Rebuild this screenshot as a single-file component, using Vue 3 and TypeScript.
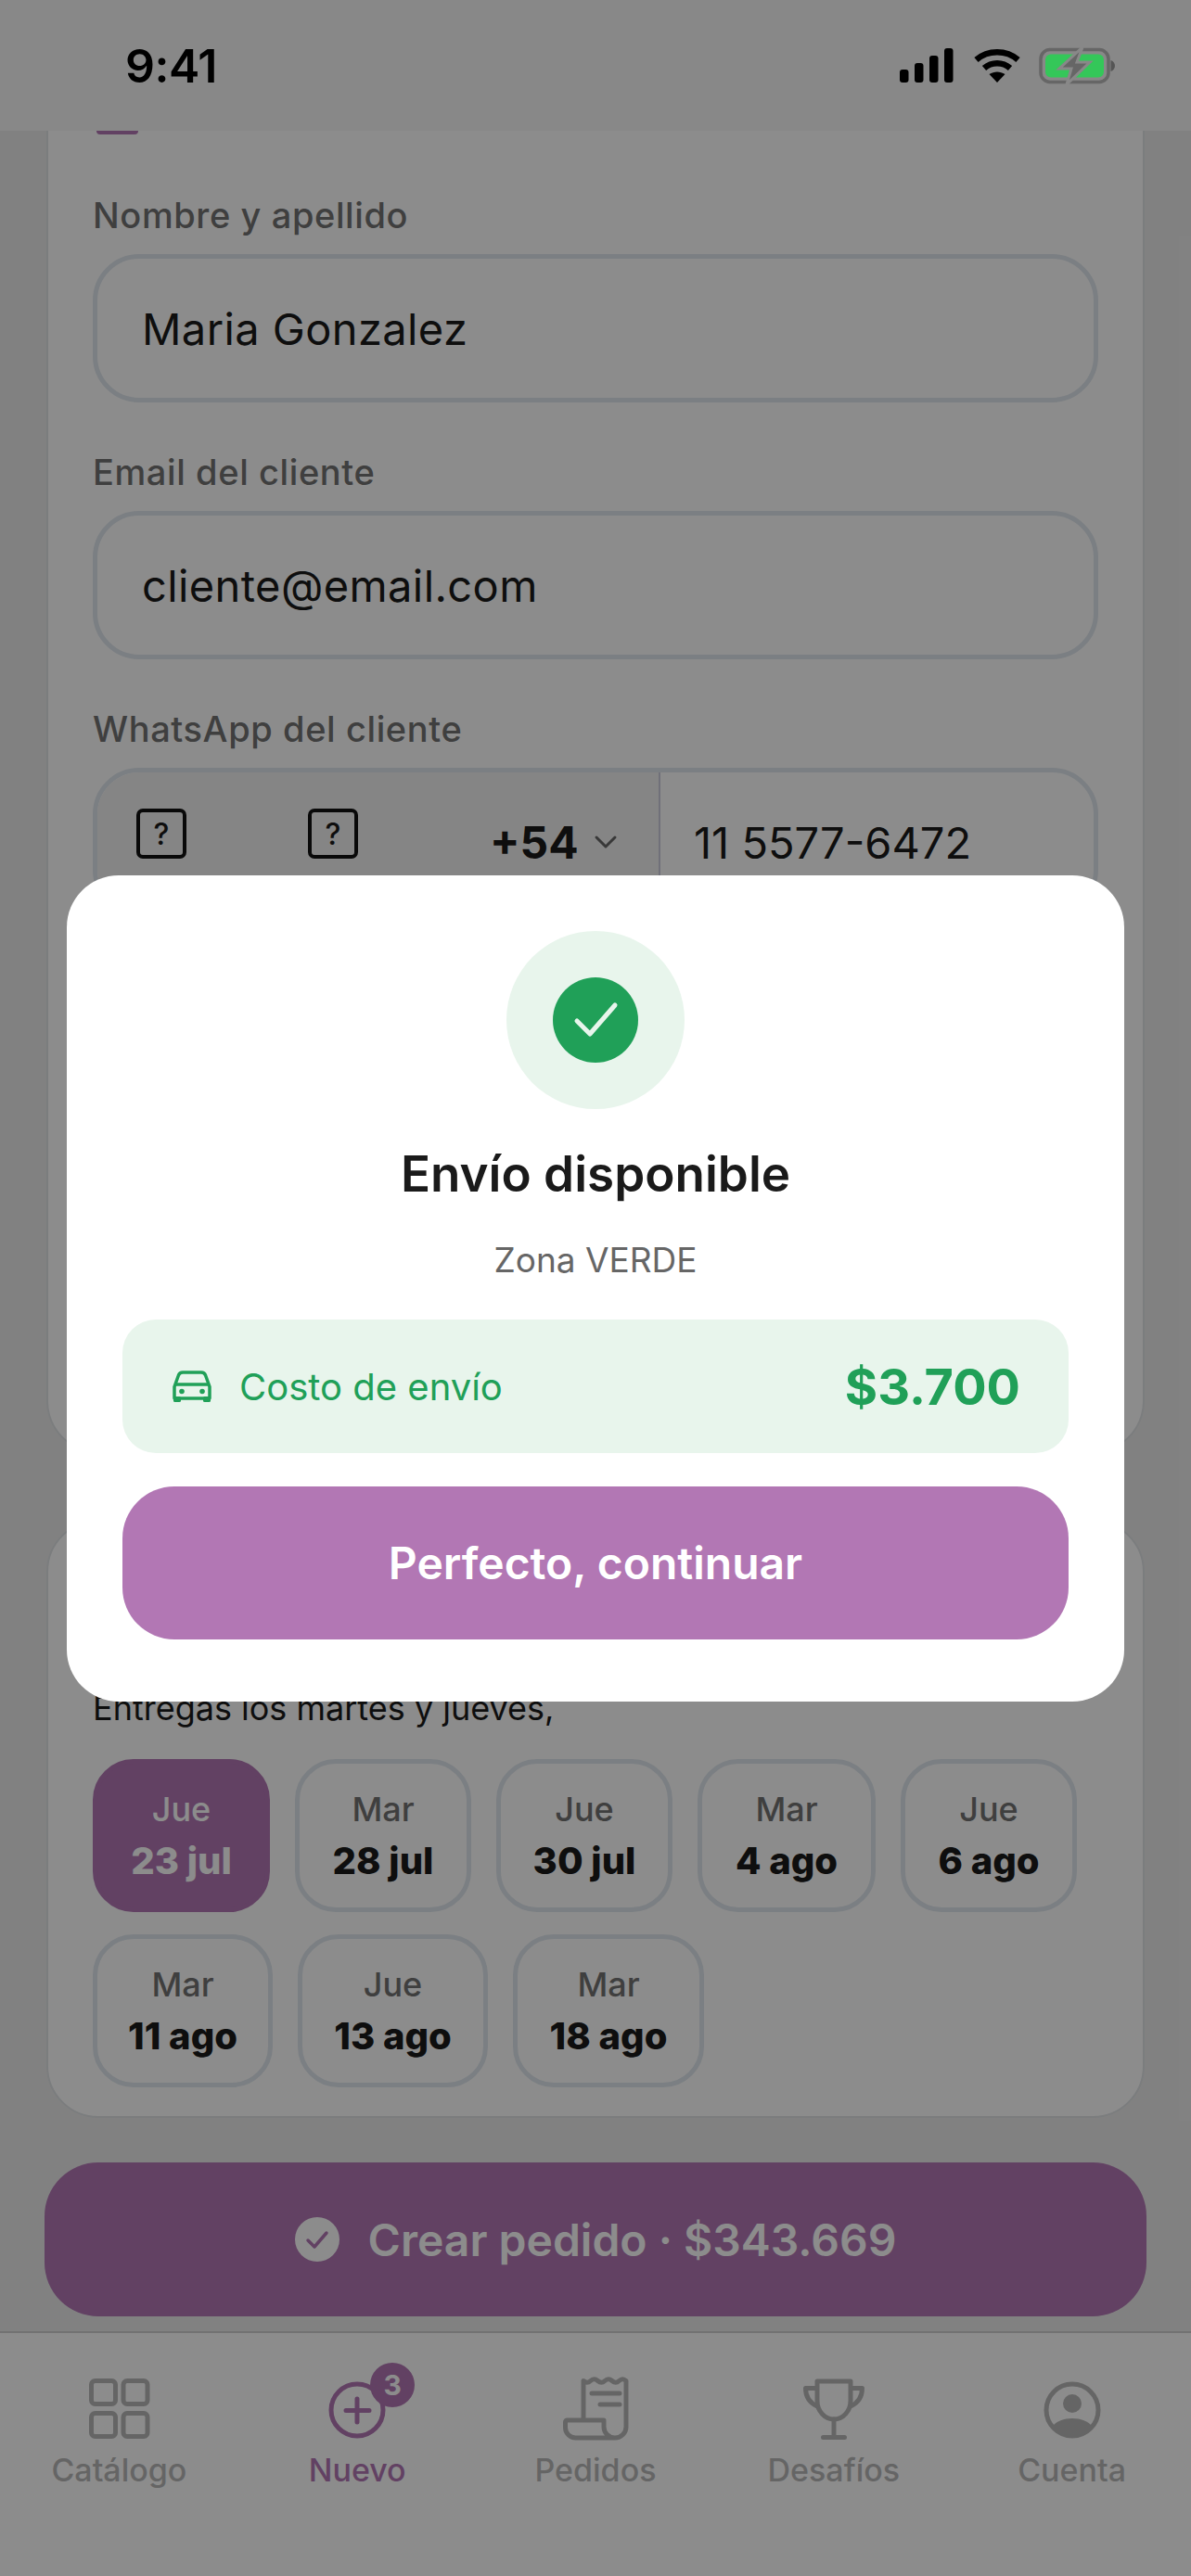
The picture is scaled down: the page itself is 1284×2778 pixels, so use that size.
<template>
  <div class="screen">
    <header class="status">
      <span class="time">9:41</span>
      <div class="status-icons">
        <svg class="signal" width="68" height="38" viewBox="0 0 68 38">
          <rect x="0" y="23" width="9.5" height="14" rx="3" />
          <rect x="16" y="16" width="9.5" height="21" rx="3" />
          <rect x="32" y="8" width="9.5" height="29" rx="3" />
          <rect x="48" y="0" width="9.5" height="37" rx="3" />
        </svg>
        <svg class="wifi" width="50" height="38" viewBox="0 0 50 38" fill="none">
          <path d="M2.5 12.5C15 1.5 35 1.5 47.500 12.5" stroke="#000" stroke-width="6.5" />
          <path d="M11 21.500C19 14.500 31 14.500 39 21.500" stroke="#000" stroke-width="6.500" />
          <path d="M16.500 28 25 37 33.500 28C28 24.500 22 24.500 16.500 28Z" fill="#000" />
        </svg>
        <svg class="battery" width="82" height="40" viewBox="0 0 82 40" fill="none">
          <rect x="2" y="2.500" width="73" height="35" rx="10" stroke="#666" stroke-width="3.500" />
          <rect x="7" y="7.500" width="63" height="25" rx="6" fill="#34c759" />
          <path d="M77.500 14v12c3-1 4.500-3.500 4.500-6s-1.500-5-4.500-6Z" fill="#555" />
          <path d="M47 0 22 23h13l-5 17 25-24H41Z" fill="#666" stroke="#888" stroke-width="3" />
        </svg>
      </div>
    </header>

    <main class="content">
      <span class="check-tail"></span>
      <section class="card card-client">
        <label class="field-label">Nombre y apellido</label>
        <div class="input">Maria Gonzalez</div>
        <label class="field-label">Email del cliente</label>
        <div class="input">cliente@email.com</div>
        <label class="field-label">WhatsApp del cliente</label>
        <div class="phone">
          <div class="phone-code">
            <span class="tofu">?</span>
            <span class="tofu">?</span>
            <b class="dial">+54</b>
            <svg width="26" height="16" viewBox="0 0 26 16" fill="none">
              <path d="M3 3l10 10L23 3" stroke="#666" stroke-width="3" stroke-linecap="round" stroke-linejoin="round" />
            </svg>
          </div>
          <div class="phone-number">11 5577-6472</div>
        </div>
      </section>

      <section class="card card-dates">
        <p class="dates-hint">Entregas los martes y jueves,</p>
        <div class="dates">
          <button
            v-for="d in dates"
            :key="d.date"
            class="date"
            :class="{ active: d.active }"
            :style="{ width: d.width + 'px' }"
          >
            <span class="date-day">{{ d.day }}</span>
            <span class="date-num">{{ d.date }}</span>
          </button>
        </div>
      </section>

      <button class="create">
        <svg width="48" height="48" viewBox="0 0 48 48">
          <circle cx="24" cy="24" r="24" fill="#fff" />
          <path d="M14 25l7 7 13-15" fill="none" stroke="#b277b4" stroke-width="3.500" stroke-linecap="round" stroke-linejoin="round" />
        </svg>
        Crear pedido · $343.669
      </button>
    </main>

    <nav class="tabbar">
      <div class="tab">
        <svg width="84" height="84" viewBox="0 0 84 84" fill="none">
          <rect x="12.500" y="11.500" width="26" height="25" rx="4" />
          <rect x="47" y="11.500" width="26" height="25" rx="4" />
          <rect x="12.500" y="46.500" width="26" height="25" rx="4" />
          <rect x="47" y="46.500" width="26" height="25" rx="4" />
        </svg>
        <span>Catálogo</span>
      </div>
      <div class="tab on">
        <div class="tab-icon">
          <svg width="84" height="84" viewBox="0 0 84 84" fill="none">
            <circle cx="42" cy="43" r="28" />
            <path d="M42 31v25M30 43.500h25" stroke-linecap="round" />
          </svg>
          <span class="badge">3</span>
        </div>
        <span>Nuevo</span>
      </div>
      <div class="tab">
        <svg width="84" height="84" viewBox="0 0 84 84" fill="none">
          <path d="M29 54V11.500q4 3.500 7.700 0t7.700 0 7.700 0 7.700 0 7.700 0 7.500 0V61a12 12 0 0 1-24 0v-7H11.500a2 2 0 0 0-2 2v6a11 11 0 0 0 11 11H63" stroke-linejoin="round" />
          <path d="M38 25h30M47 37h21" stroke-linecap="round" />
        </svg>
        <span>Pedidos</span>
      </div>
      <div class="tab">
        <svg width="84" height="84" viewBox="0 0 84 84" fill="none">
          <path d="M24 12H60V33a18 20 0 0 1-36 0Z" stroke-linejoin="round" />
          <path d="M24 19.500H11.500C11.500 28 15.500 35 24 39M60 19.500H72.500C72.500 28 68.500 35 60 39" stroke-linejoin="round" />
          <path d="M42 53V72M30.500 72.500H53.500" stroke-linecap="round" />
        </svg>
        <span>Desafíos</span>
      </div>
      <div class="tab">
        <svg width="84" height="84" viewBox="0 0 84 84" fill="none">
          <circle cx="42" cy="43" r="28" />
          <circle class="solid" cx="42" cy="36" r="10" />
          <path class="solid" d="M20 61C25 55 33 52 42 52S59 55 64 61A28 28 0 0 1 20 61Z" />
        </svg>
        <span>Cuenta</span>
      </div>
    </nav>

    <div class="overlay">
      <div class="modal">
        <div class="halo">
          <svg width="92" height="92" viewBox="0 0 92 92">
            <circle cx="46" cy="46" r="46" fill="#20a058" />
            <path d="M26 47l14 14 27-31" fill="none" stroke="#e8f5ec" stroke-width="5" stroke-linecap="round" stroke-linejoin="round" />
          </svg>
        </div>
        <h2 class="modal-title">Envío disponible</h2>
        <p class="modal-zone">Zona VERDE</p>
        <div class="cost">
          <svg width="42" height="34" viewBox="0 0 42 34" fill="none">
            <path d="M2 30V17.500L6.500 5C7.300 3 8.800 2 11 2H31C33.200 2 34.700 3 35.500 5L40 17.500V30Z" stroke="#20a058" stroke-width="3.500" stroke-linejoin="round" />
            <path d="M3 15H39" stroke="#20a058" stroke-width="3.500" />
            <circle cx="10" cy="22.500" r="2.800" fill="#20a058" />
            <circle cx="32" cy="22.500" r="2.800" fill="#20a058" />
            <rect x="1" y="28" width="8" height="6" rx="1.500" fill="#20a058" />
            <rect x="33" y="28" width="8" height="6" rx="1.500" fill="#20a058" />
          </svg>
          <span class="cost-label">Costo de envío</span>
          <span class="cost-value">$3.700</span>
        </div>
        <button class="confirm">Perfecto, continuar</button>
      </div>
    </div>
  </div>
</template>

<script setup lang="ts">
interface DateChip {
  day: string;
  date: string;
  width: number;
  active?: boolean;
}

const dates: DateChip[] = [
  { day: 'Jue', date: '23 jul', width: 191, active: true },
  { day: 'Mar', date: '28 jul', width: 190 },
  { day: 'Jue', date: '30 jul', width: 190 },
  { day: 'Mar', date: '4 ago', width: 192 },
  { day: 'Jue', date: '6 ago', width: 190 },
  { day: 'Mar', date: '11 ago', width: 194 },
  { day: 'Jue', date: '13 ago', width: 205 },
  { day: 'Mar', date: '18 ago', width: 206 },
];
</script>

<style>
html,
body {
  margin: 0;
  background: #ececec;
}
</style>

<style scoped>
.screen {
  position: relative;
  width: 1284px;
  height: 2778px;
  overflow: hidden;
  background: #ececec;
  color: #1a1a1a;
  font-family: Inter, 'Liberation Sans', sans-serif;
}
.status {
  position: relative;
  z-index: 3;
  display: flex;
  align-items: center;
  justify-content: space-between;
  box-sizing: border-box;
  height: 141px;
  padding: 0 82px 0 135px;
  background: #888;
}
.time {
  margin-bottom: 0;
  color: #000;
  font-size: 50px;
  font-weight: 600;
  letter-spacing: -0.5px;
}
.status-icons {
  display: flex;
  align-items: center;
  gap: 20px;
}
.status-icons .signal {
  margin-right: -8px;
  fill: #000;
}
.content {
  position: relative;
  display: flex;
  flex-direction: column;
  align-items: center;
}
.check-tail {
  position: absolute;
  z-index: 1;
  top: 0;
  left: 104px;
  width: 45px;
  height: 4px;
  border-radius: 0 0 4px 4px;
  background: #b277b4;
}
.card {
  box-sizing: border-box;
  width: 1184px;
  border: 2px solid #e0e3e6;
  background: #fff;
}
.card-client {
  display: flex;
  flex-direction: column;
  height: 1426px;
  padding: 68px 48px 0;
  border-top: 0;
  border-radius: 0 0 56px 56px;
}
.field-label {
  margin-bottom: 19px;
  color: #737373;
  font-size: 38px;
  font-weight: 500;
  line-height: 46px;
  letter-spacing: 0.6px;
}
.input {
  display: flex;
  align-items: center;
  box-sizing: border-box;
  height: 160px;
  margin-bottom: 52px;
  padding: 0 48px;
  border: 5px solid #e0e7ee;
  border-radius: 50px;
  font-size: 47px;
  letter-spacing: 0.4px;
}
.phone {
  display: flex;
  box-sizing: border-box;
  height: 160px;
  border: 5px solid #e0e7ee;
  border-radius: 50px;
  overflow: hidden;
}
.phone-code {
  display: flex;
  align-items: center;
  box-sizing: border-box;
  width: 607px;
  padding: 0 0 0 42px;
  border-right: 2px solid #ccd;
  background: #f3f3f3;
}
.tofu {
  display: flex;
  align-items: center;
  justify-content: center;
  box-sizing: border-box;
  width: 54px;
  height: 54px;
  margin: -18px 131px 0 0;
  border: 4px solid #111;
  border-radius: 7px;
  font-size: 32px;
  font-weight: 500;
}
.tofu + .tofu {
  margin-right: 142px;
}
.dial {
  margin-right: 16px;
  font-size: 48px;
  font-weight: 700;
}
.phone-number {
  display: flex;
  align-items: center;
  padding-left: 36px;
  font-size: 47px;
}
.card-dates {
  height: 645px;
  margin-top: 72px;
  padding: 0 48px;
  border-radius: 56px;
}
.dates-hint {
  margin: 178px 0 0;
  color: #1a1a1a;
  font-size: 36px;
  line-height: 46px;
}
.dates {
  display: flex;
  flex-wrap: wrap;
  gap: 24px 27px;
  margin-top: 32px;
}
.date {
  display: flex;
  flex-direction: column;
  align-items: center;
  justify-content: center;
  box-sizing: border-box;
  height: 165px;
  padding: 0;
  border: 5px solid #e0e7ee;
  border-radius: 44px;
  background: #fff;
  font-family: inherit;
}
.date-day {
  color: #737373;
  font-size: 36px;
  font-weight: 500;
  line-height: 54px;
}
.date-num {
  color: #1a1a1a;
  font-size: 40px;
  font-weight: 800;
  line-height: 58px;
}
.date.active {
  border-color: #b277b4;
  background: #b277b4;
}
.date.active .date-day,
.date.active .date-num {
  color: #fff;
}
.create {
  display: flex;
  align-items: center;
  justify-content: center;
  gap: 31px;
  box-sizing: border-box;
  width: 1188px;
  height: 166px;
  margin-top: 48px;
  border: 0;
  border-radius: 58px;
  background: #b277b4;
  color: #fff;
  font-family: inherit;
  font-size: 48px;
  font-weight: 600;
}
.tabbar {
  position: absolute;
  left: 0;
  right: 0;
  top: 2514px;
  bottom: 0;
  display: grid;
  grid-template-columns: repeat(5, 1fr);
  box-sizing: border-box;
  padding-top: 40px;
  border-top: 2px solid #d0d0d0;
  background: #fff;
}
.tab {
  display: flex;
  flex-direction: column;
  align-items: center;
  color: #b9b9b9;
  font-size: 34px;
  font-weight: 500;
  line-height: 44px;
}
.tab svg {
  stroke: #b9b9b9;
  stroke-width: 5;
  margin-bottom: 2px;
}
.tab svg .solid {
  fill: #b9b9b9;
  stroke: none;
}
.tab.on {
  color: #b277b4;
}
.tab.on svg {
  stroke: #b277b4;
}
.tab-icon {
  position: relative;
  height: 86px;
}
.badge {
  position: absolute;
  top: -8px;
  left: 56px;
  display: flex;
  align-items: center;
  justify-content: center;
  width: 48px;
  height: 48px;
  border-radius: 50%;
  background: #b277b4;
  color: #fff;
  font-size: 30px;
  font-weight: 700;
}
.overlay {
  position: absolute;
  z-index: 2;
  inset: 0;
  background: rgba(0, 0, 0, 0.45);
}
.modal {
  position: absolute;
  top: 944px;
  left: 72px;
  display: flex;
  flex-direction: column;
  align-items: center;
  box-sizing: border-box;
  width: 1140px;
  height: 891px;
  padding: 60px;
  border-radius: 56px;
  background: #fff;
}
.halo {
  display: flex;
  align-items: center;
  justify-content: center;
  flex: none;
  width: 192px;
  height: 192px;
  border-radius: 50%;
  background: #e8f5ec;
}
.modal-title {
  margin: 40px 0 0;
  font-size: 53px;
  font-weight: 600;
  line-height: 60px;
}
.modal-zone {
  margin: 40px 0 0;
  color: #666;
  font-size: 37px;
  line-height: 46px;
}
.cost {
  display: flex;
  align-items: center;
  box-sizing: border-box;
  width: 100%;
  height: 144px;
  margin-top: 41px;
  padding: 0 52px 0 54px;
  border-radius: 36px;
  background: #e8f5ec;
}
.cost-label {
  margin-left: 30px;
  color: #20a058;
  font-size: 40px;
}
.cost-value {
  margin-left: auto;
  color: #20a058;
  font-size: 54px;
  font-weight: 700;
}
.confirm {
  width: 100%;
  height: 165px;
  margin-top: 36px;
  border: 0;
  border-radius: 56px;
  background: #b277b4;
  color: #fff;
  font-family: inherit;
  font-size: 48px;
  font-weight: 600;
}
</style>
